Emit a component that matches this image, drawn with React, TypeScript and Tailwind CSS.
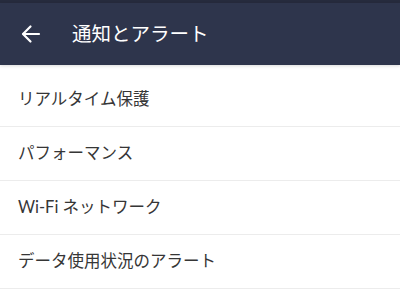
import React from "react";

const items = ["リアルタイム保護", "パフォーマンス", "Wi-Fi ネットワーク", "データ使用状況のアラート"];

export default function App() {
  return (
    <div className="w-[400px] h-[290px] overflow-hidden bg-white" style={{ fontFamily: 'Lato, "Noto Sans CJK JP", "Noto Sans", sans-serif' }}>
      <div className="h-[3px] bg-[#262b3d]" />
      <header className="h-[62px] bg-[#2e354c] flex items-center text-white shadow-[0_1px_3px_rgba(0,0,0,0.15)] relative">
        <svg width="20" height="20" viewBox="0 0 20 20" className="ml-[21px]" fill="none" stroke="white" strokeWidth="2.2" strokeLinecap="round" strokeLinejoin="round">
          <path d="M18 10H2.5" />
          <path d="M9.5 2.5 2 10l7.5 7.5" />
        </svg>
        <h1 className="ml-[31px] text-[19.5px] leading-none">通知とアラート</h1>
      </header>
      <ul className="pt-2">
        {items.map((t) => (
          <li key={t} className="h-[54px] border-b border-[#ececec] flex items-center pl-[18px] text-[16.5px] text-[#363636]">
            {t}
          </li>
        ))}
      </ul>
    </div>
  );
}
